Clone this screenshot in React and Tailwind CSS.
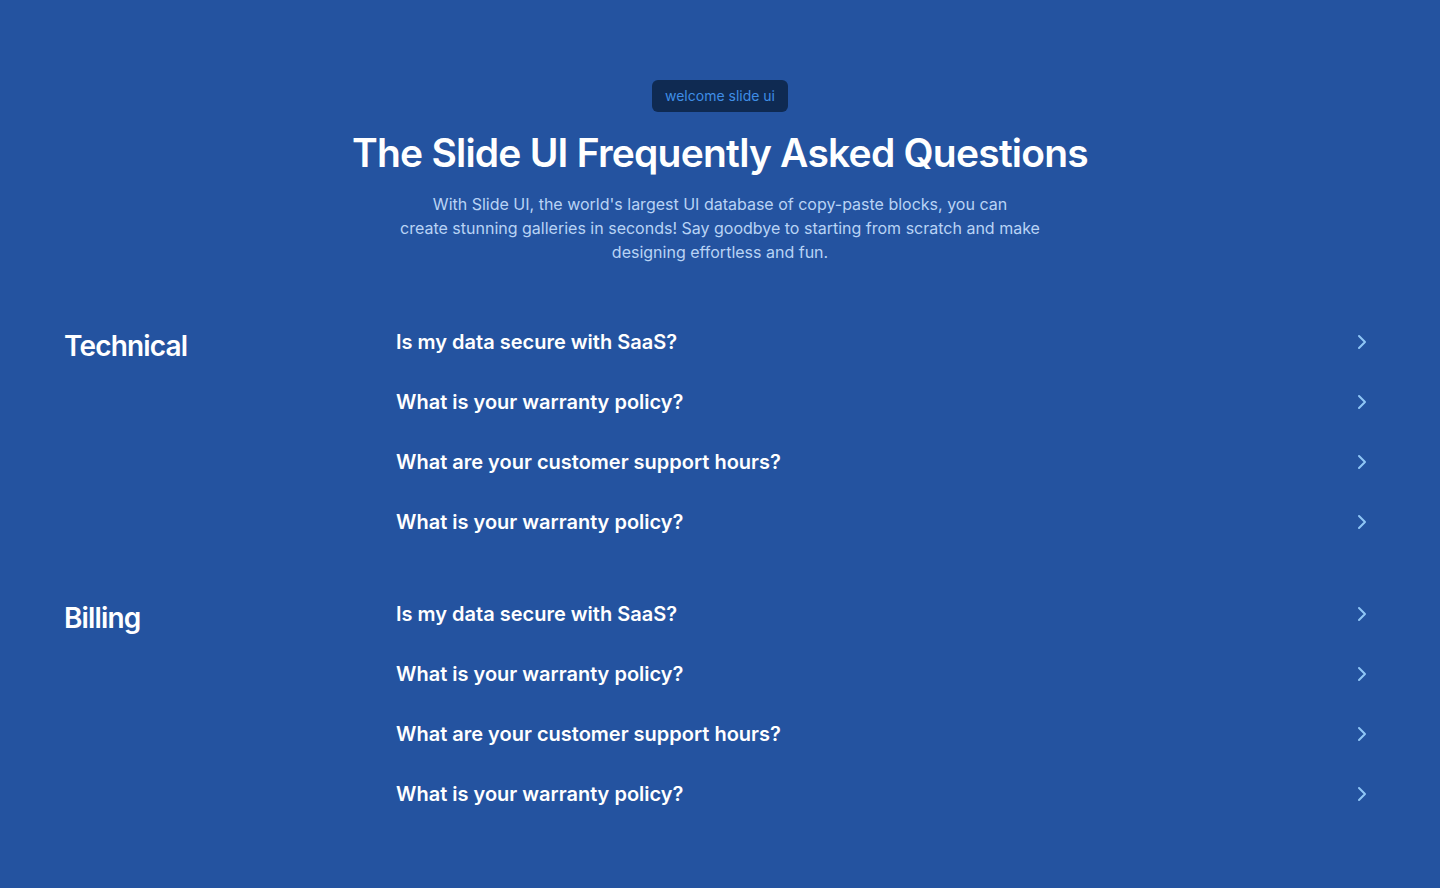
import React from 'react';
import { ChevronRight } from 'lucide-react';

const sections = [
  {
    title: 'Technical',
    questions: [
      'Is my data secure with SaaS?',
      'What is your warranty policy?',
      'What are your customer support hours?',
      'What is your warranty policy?',
    ],
  },
  {
    title: 'Billing',
    questions: [
      'Is my data secure with SaaS?',
      'What is your warranty policy?',
      'What are your customer support hours?',
      'What is your warranty policy?',
    ],
  },
];

function FaqRow({ question }) {
  return (
    <button className="flex h-[60px] w-full items-center justify-between text-left">
      <span className="text-xl font-semibold text-white">{question}</span>
      <ChevronRight size={24} strokeWidth={2} className="text-[#8fc6f6]" />
    </button>
  );
}

export default function App() {
  return (
    <div
      className="min-h-screen bg-[#2453a0] px-16 pb-16 pt-20"
      style={{ fontFamily: 'Inter, "Noto Sans", sans-serif' }}
    >
      {/* Header */}
      <div className="flex flex-col items-center text-center">
        <span className="rounded-md bg-[#0f2a52] px-[13px] py-[6px] text-sm text-[#3f8ee6]">
          welcome slide ui
        </span>
        <h1 className="mt-[16px] text-[39px] font-semibold leading-[50px] tracking-[-0.02em] text-white">
          The Slide UI Frequently Asked Questions
        </h1>
        <p className="mt-[14px] max-w-[660px] text-base leading-6 text-[#b9d3f5]">
          With Slide UI, the world's largest UI database of copy-paste blocks, you can
          <br />
          create stunning galleries in seconds! Say goodbye to starting from scratch and make designing
          effortless and fun.
        </p>
      </div>

      {/* FAQ sections */}
      <div className="mt-[48px] flex flex-col gap-8">
        {sections.map((section) => (
          <div key={section.title} className="flex">
            <h2 className="w-[332px] shrink-0 pt-[16px] text-[28px] font-semibold leading-9 tracking-[-0.03em] text-white">
              {section.title}
            </h2>
            <div className="flex-1 pr-[2px]">
              {section.questions.map((q, i) => (
                <FaqRow key={i} question={q} />
              ))}
            </div>
          </div>
        ))}
      </div>
    </div>
  );
}
